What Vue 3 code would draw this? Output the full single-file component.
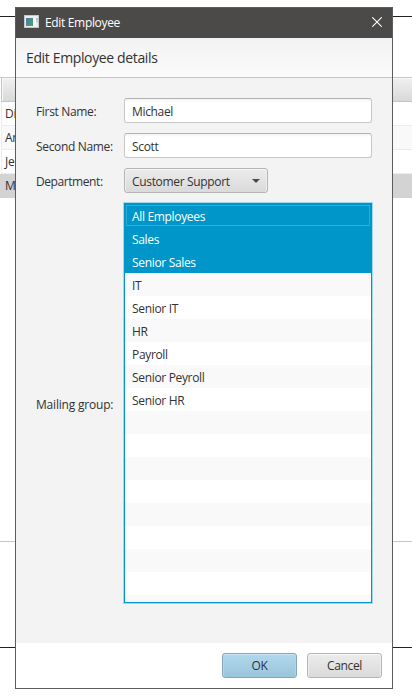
<script setup>
const rows = ['Di', 'An', 'Je', 'Mi']
const fields = [
  { label: 'First Name:', value: 'Michael' },
  { label: 'Second Name:', value: 'Scott' },
]
const groups = ['All Employees', 'Sales', 'Senior Sales', 'IT', 'Senior IT', 'HR', 'Payroll', 'Senior Peyroll', 'Senior HR', '', '', '', '', '', '', '', '', '']
</script>

<template>
  <div class="screen">
    <div class="backdrop">
      <div class="window">
        <div class="table">
          <div class="thead"></div>
          <div v-for="(r, i) in rows" :key="r" class="trow" :class="{ odd: i === 1, picked: i === 3 }">{{ r }}</div>
        </div>
      </div>
    </div>
    <div class="dialog">
      <div class="titlebar">
        <svg class="app-icon" width="15" height="13" viewBox="0 0 15 13">
          <defs>
            <linearGradient id="pane" x1="0" y1="0" x2="1" y2="1">
              <stop offset="0" stop-color="#4a78a8" />
              <stop offset="1" stop-color="#4fa56c" />
            </linearGradient>
            <linearGradient id="side" x1="0" y1="0" x2="0" y2="1">
              <stop offset="0" stop-color="#9cc0df" />
              <stop offset="1" stop-color="#d3ead0" />
            </linearGradient>
          </defs>
          <rect width="15" height="13" fill="#eceeef" />
          <rect x="0.5" y="0.5" width="14" height="12" fill="none" stroke="#c4c7c9" />
          <rect x="2" y="3" width="7" height="8" fill="url(#pane)" />
          <rect x="9" y="3" width="3" height="8" fill="#f5f6f7" />
          <rect x="12" y="3" width="2" height="5" fill="url(#side)" />
          <rect x="12" y="8" width="2" height="3" fill="#e6f2e6" />
        </svg>
        <span class="title">Edit Employee</span>
        <svg class="close" width="10" height="10" viewBox="0 0 10 10">
          <path d="M0.3 0.3L9.7 9.7M9.7 0.3L0.3 9.7" stroke="#fff" stroke-width="1.1" fill="none" />
        </svg>
      </div>
      <div class="header"><span>Edit Employee details</span></div>
      <div class="form">
        <template v-for="f in fields" :key="f.label">
          <label>{{ f.label }}</label>
          <div class="input"><span>{{ f.value }}</span></div>
        </template>
        <label class="dept">Department:</label>
        <div class="combo">
          <span>Customer Support</span>
          <svg width="8" height="4" viewBox="0 0 8 4"><path d="M0 0H8L4 4Z" fill="#4b4b4b" /></svg>
        </div>
        <label class="mail">Mailing group:</label>
        <div class="list">
          <div v-for="(g, i) in groups" :key="i" class="item" :class="{ selected: i < 3, focused: i === 0 }"><span>{{ g }}</span></div>
        </div>
      </div>
      <div class="footer">
        <button class="btn ok">OK</button>
        <button class="btn">Cancel</button>
      </div>
    </div>
  </div>
</template>

<style>
body { margin: 0; background: #fff; }
</style>

<style scoped>
* { box-sizing: border-box; }
.screen {
  position: relative;
  width: 412px;
  height: 699px;
  overflow: hidden;
  background: #fff;
  font-family: "Open Sans", "Noto Sans", sans-serif;
  font-size: 12px;
  line-height: 16px;
  letter-spacing: -0.33px;
  color: #323232;
}
.backdrop { padding-top: 16px; }
.window {
  height: 632px;
  padding-top: 61px;
  border-top: 1px solid #222;
  border-bottom: 1px solid #222;
}
.table {
  height: 465px;
  margin-top: -1px;
  border-top: 1px solid #c8c8c8;
  border-bottom: 1px solid #c8c8c8;
}
.thead {
  height: 24px;
  margin-left: 1px;
  border-left: 1px solid #c4c4c4;
  border-bottom: 1px solid #c4c4c4;
  background: linear-gradient(#f0f0f0, #d9d9d9);
  box-shadow: inset 1px 1px 0 #f8f8f8;
}
.trow {
  height: 24px;
  margin-left: 1px;
  padding: 4px 0 0 3px;
  border-left: 1px solid #ededed;
  border-bottom: 1px solid #ededed;
}
.odd { background: #f9f9f9; }
.picked { margin-left: 0; padding-left: 4px; background: #d3d3d3; border-color: #d3d3d3; }
.dialog {
  position: absolute;
  left: 15px;
  top: 7px;
  width: 378px;
  height: 682px;
  display: flex;
  flex-direction: column;
  border: 1px solid #5c5c5c;
  background: #fff;
}
.titlebar {
  height: 30px;
  flex: none;
  display: flex;
  align-items: center;
  padding: 0 10px 0 8px;
  background: #4c4a48;
  color: #fff;
}
.title { margin-left: 6px; flex: 1; }
.app-icon { margin-top: -3px; }
.close { margin-top: -2px; }
.header {
  height: 40px;
  flex: none;
  display: flex;
  align-items: center;
  padding-left: 10px;
  border-bottom: 1px solid #c6c6c6;
  background: linear-gradient(#f2f2f2, #fbfbfb);
  font-size: 14px;
  letter-spacing: -0.36px;
}
.form {
  flex: none;
  height: 565px;
  display: grid;
  grid-template-columns: 78px 248px;
  grid-template-rows: 25px 25px 25px 400px;
  column-gap: 10px;
  row-gap: 10px;
  align-items: center;
  padding: 20px 0 0 20px;
  background: #f3f3f3;
}
label { white-space: nowrap; padding-top: 2px; }
.dept { letter-spacing: -0.42px; }
.mail { padding-top: 3px; letter-spacing: -0.2px; }
.input, .combo {
  height: 25px;
  display: flex;
  align-items: center;
  padding: 0 7px;
  border: 1px solid #c8c8c8;
  border-radius: 3px;
}
.input span, .combo span { padding-top: 2px; }
.input {
  border-top-color: #b3b3b3;
  background: linear-gradient(#f2f2f2, #fff 3px);
}
.combo {
  width: 144px;
  justify-content: space-between;
  border-color: #b5b5b5;
  background: linear-gradient(#ececec, #dadada);
  box-shadow: inset 0 1px 0 #f7f7f7, inset 1px 0 0 #eee, inset -1px 0 0 #eee;
}
.list {
  height: 400px;
  overflow: hidden;
  border: 1px solid #0096c9;
  box-shadow: 0 0 0 1px #a2d8ec;
  background: #fff;
}
.item { height: 23px; padding: 5px 7px 0; }
.item:nth-child(even) { background: #f9f9f9; }
.item.selected { background: #0096c9; color: #fff; }
.item.focused { box-shadow: inset 0 0 0 1px #0096c9, inset 0 0 0 2px #33abd4; }
.footer {
  flex: 1;
  display: flex;
  justify-content: flex-end;
  gap: 10px;
  padding: 10px 10px 0 0;
}
.btn {
  width: 75px;
  height: 25px;
  padding: 0;
  border: 1px solid #b5b5b5;
  border-radius: 3px;
  font: inherit;
  letter-spacing: inherit;
  color: #323232;
  background: linear-gradient(#ececec, #dadada);
  box-shadow: inset 0 1px 0 #f7f7f7, inset 1px 0 0 #eee, inset -1px 0 0 #eee;
}
.ok {
  border-color: #86a6b5;
  background: linear-gradient(#b1d9ee, #9ac4d9);
  box-shadow: inset 0 1px 0 #c9e6f5, inset 1px 0 0 #b3d6e6, inset -1px 0 0 #b3d6e6;
}
</style>
